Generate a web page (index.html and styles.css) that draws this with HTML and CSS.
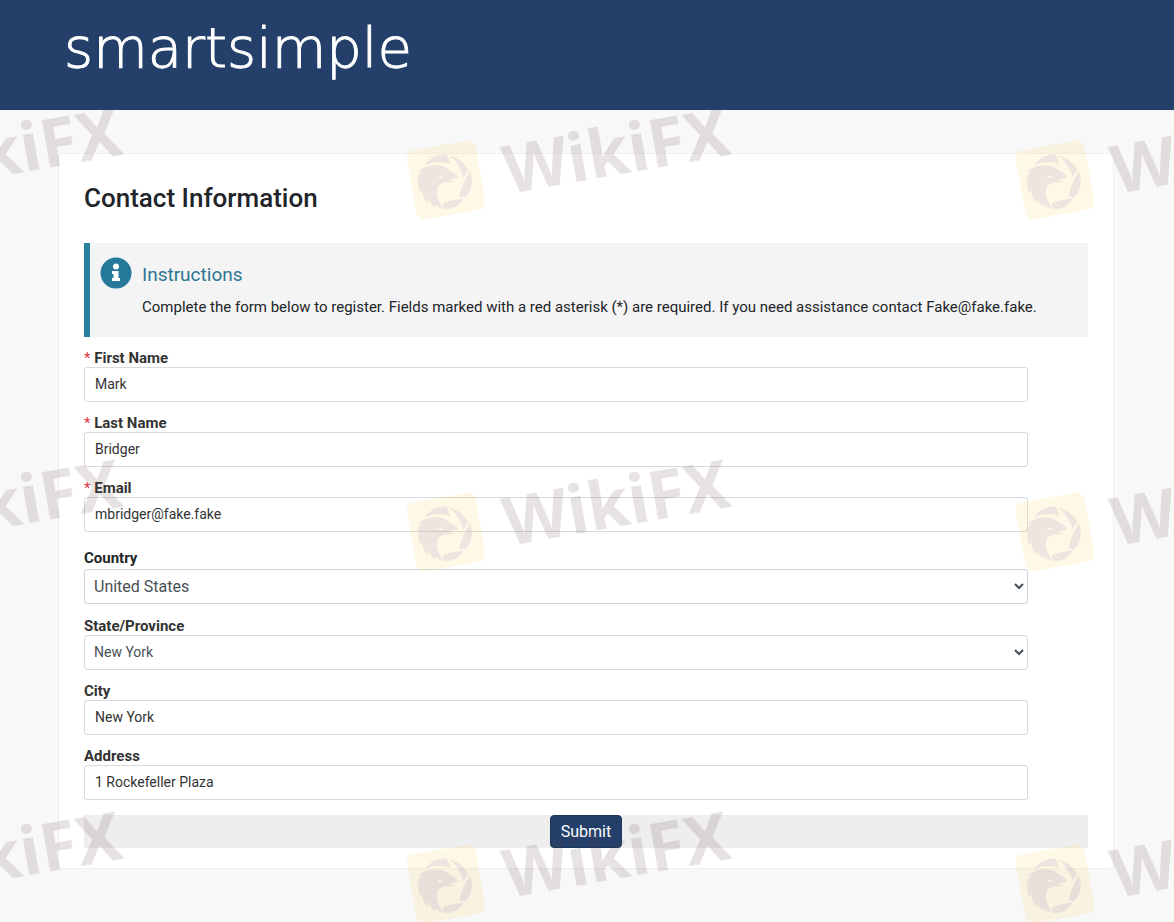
FILE: index.html
```html
<!DOCTYPE html>
<html lang="en">
<head>
    <meta charset="UTF-8">
    <meta name="viewport" content="width=device-width, initial-scale=1.0">
    <title>Contact Information</title>
    <link rel="stylesheet" href="styles.css">
</head>
<body>
    <header class="header">
        <div class="logo">smartsimple</div>
    </header>

    <main class="main">
        <form class="card">
            <h1 class="title">Contact Information</h1>

            <section class="instructions">
                <svg class="info-icon" viewBox="0 0 32 32" aria-hidden="true">
                    <circle cx="16" cy="16" r="15.5" fill="#27799c"/>
                    <circle cx="16" cy="9.5" r="3" fill="#fff"/>
                    <path d="M12 14h6.500v7h1.500v3h-8v-3h1.500v-4h-1.500z" fill="#fff"/>
                </svg>
                <div>
                    <h2 class="instructions-title">Instructions</h2>
                    <p class="instructions-text">Complete the form below to register. Fields marked with a red asterisk (*) are required. If you need assistance contact Fake@fake.fake.</p>
                </div>
            </section>

            <div class="fields">
                <div class="field">
                    <label for="first-name"><span class="required">*</span> First Name</label>
                    <input id="first-name" type="text" value="Mark">
                </div>
                <div class="field">
                    <label for="last-name"><span class="required">*</span> Last Name</label>
                    <input id="last-name" type="text" value="Bridger">
                </div>
                <div class="field">
                    <label for="email"><span class="required">*</span> Email</label>
                    <input id="email" type="email" value="mbridger@fake.fake">
                </div>
                <div class="field field-country">
                    <label for="country">Country</label>
                    <select id="country"><option>United States</option></select>
                </div>
                <div class="field">
                    <label for="state">State/Province</label>
                    <select id="state"><option>New York</option></select>
                </div>
                <div class="field">
                    <label for="city">City</label>
                    <input id="city" type="text" value="New York">
                </div>
                <div class="field">
                    <label for="address">Address</label>
                    <input id="address" type="text" value="1 Rockefeller Plaza">
                </div>
            </div>

            <div class="actions">
                <button class="btn" type="submit">Submit</button>
            </div>
        </form>

        <svg class="watermark" aria-hidden="true">
            <defs>
                <g id="badge">
                    <rect class="badge-bg" x="-35" y="-35" width="70" height="70" rx="8" transform="rotate(-10)"/>
                    <g transform="scale(0.3333) translate(-135 -135)">
                        <g class="badge-mark">
                            <path d="M72 90Q92 62 130 58L138 60L149 87Q108 74 72 90z"/>
                            <path d="M145 61Q182 72 201 103L189 127Q174 85 145 61z"/>
                            <path d="M207 108Q224 155 192 187L174 183Q184 147 207 108z"/>
                            <path d="M124 206Q155 192 188 191Q166 224 130 222z"/>
                            <path d="M55 108Q75 90 108 91Q137 92 148 109Q166 111 171 129Q157 128 151 133L141 136L163 138Q143 145 133 142Q109 148 107 169Q107 193 126 220Q112 218 102 207L105 217Q88 209 80 190L82 206Q64 187 63 165L56 172Q48 146 55 135L50 139Q49 118 62 113z"/>
                        </g>
                        <path class="badge-eye" d="M108 122Q119 121 130 128Q117 132 108 122z"/>
                    </g>
                </g>
            </defs>
            <use href="#badge" x="446" y="70"/>
            <use href="#badge" x="1055" y="70"/>
            <use href="#badge" x="446" y="422"/>
            <use href="#badge" x="1055" y="422"/>
            <use href="#badge" x="446" y="774"/>
            <use href="#badge" x="1055" y="774"/>
            <text transform="translate(-100 84) rotate(-10)">WikiFX</text>
            <text transform="translate(508 84) rotate(-10)">WikiFX</text>
            <text transform="translate(1116 84) rotate(-10)">WikiFX</text>
            <text transform="translate(-100 436) rotate(-10)">WikiFX</text>
            <text transform="translate(508 436) rotate(-10)">WikiFX</text>
            <text transform="translate(1116 436) rotate(-10)">WikiFX</text>
            <text transform="translate(-100 788) rotate(-10)">WikiFX</text>
            <text transform="translate(508 788) rotate(-10)">WikiFX</text>
            <text transform="translate(1116 788) rotate(-10)">WikiFX</text>
        </svg>
    </main>
</body>
</html>
```
FILE: styles.css
```css
* {
    margin: 0;
    padding: 0;
    box-sizing: border-box;
}

body {
    display: flex;
    flex-direction: column;
    min-height: 100vh;
    font-family: Roboto, "Liberation Sans", sans-serif;
    font-size: 15px;
    color: #212529;
    background: #f8f8f8;
}

.header {
    height: 110px;
    padding: 16px 64px;
    background: #233f6a;
}

.logo {
    font-family: "DejaVu Sans", sans-serif;
    font-size: 56px;
    font-weight: 200;
    line-height: 64px;
    color: #fff;
    -webkit-text-stroke: 1px #fff;
}

.main {
    position: relative;
    flex: 1;
    padding: 43px 60px 53px 58px;
    overflow: hidden;
}

.card {
    padding: 29px 25px 20px;
    background: #fff;
    border: 1px solid #f0f0f0;
    border-radius: 4px;
}

.title {
    margin-bottom: 29px;
    font-size: 26px;
    font-weight: 500;
    line-height: 31px;
}

.instructions {
    display: flex;
    gap: 10px;
    min-height: 94px;
    padding: 14px 10px;
    margin-bottom: 12px;
    background: #f4f4f4;
    border-left: 6px solid #2a7fa0;
}

.info-icon {
    flex: none;
    width: 32px;
    height: 32px;
}

.instructions-title {
    margin-bottom: 4px;
    font-size: 19px;
    font-weight: 400;
    line-height: 36px;
    color: #2f7692;
}

.instructions-text {
    line-height: 20px;
}

.fields {
    display: flex;
    flex-direction: column;
    gap: 12px;
    margin-right: 60px;
}

.field label {
    display: block;
    font-weight: 700;
    line-height: 18px;
    color: #333;
}

.required {
    font-weight: 400;
    color: #dc3545;
}

.field input,
.field select {
    display: block;
    width: 100%;
    height: 35px;
    padding: 0 10px 2px;
    font-family: inherit;
    font-size: 14px;
    color: #333;
    background: #fff;
    border: 1px solid #d8dbde;
    border-radius: 3px;
}

.field select {
    padding: 0 5px 1px;
    color: #495057;
}

.field-country {
    padding: 5px 0 1px;
}

.field-country label {
    padding-bottom: 2px;
    color: #212529;
}

.field-country select {
    padding-bottom: 0;
    font-size: 16px;
    border-color: #ced4da;
}

.actions {
    margin-top: 15px;
    text-align: center;
    background: #eee;
}

.btn {
    display: inline-block;
    height: 33px;
    padding: 0 10px;
    font-family: inherit;
    font-size: 16px;
    color: #fff;
    vertical-align: top;
    background: #233f6a;
    border: 1px solid #1d365c;
    border-radius: 4px;
    cursor: pointer;
}

.watermark {
    position: absolute;
    top: 0;
    left: 0;
    width: 100%;
    height: 100%;
    pointer-events: none;
}

.watermark text {
    font-family: "Noto Sans", sans-serif;
    font-size: 67px;
    font-weight: 700;
    fill: rgba(95, 70, 65, 0.15);
}

.badge-bg {
    fill: rgba(250, 205, 90, 0.15);
}

.badge-mark {
    fill: rgba(100, 85, 170, 0.11);
}

.badge-eye {
    fill: #fdf6e4;
}
```
